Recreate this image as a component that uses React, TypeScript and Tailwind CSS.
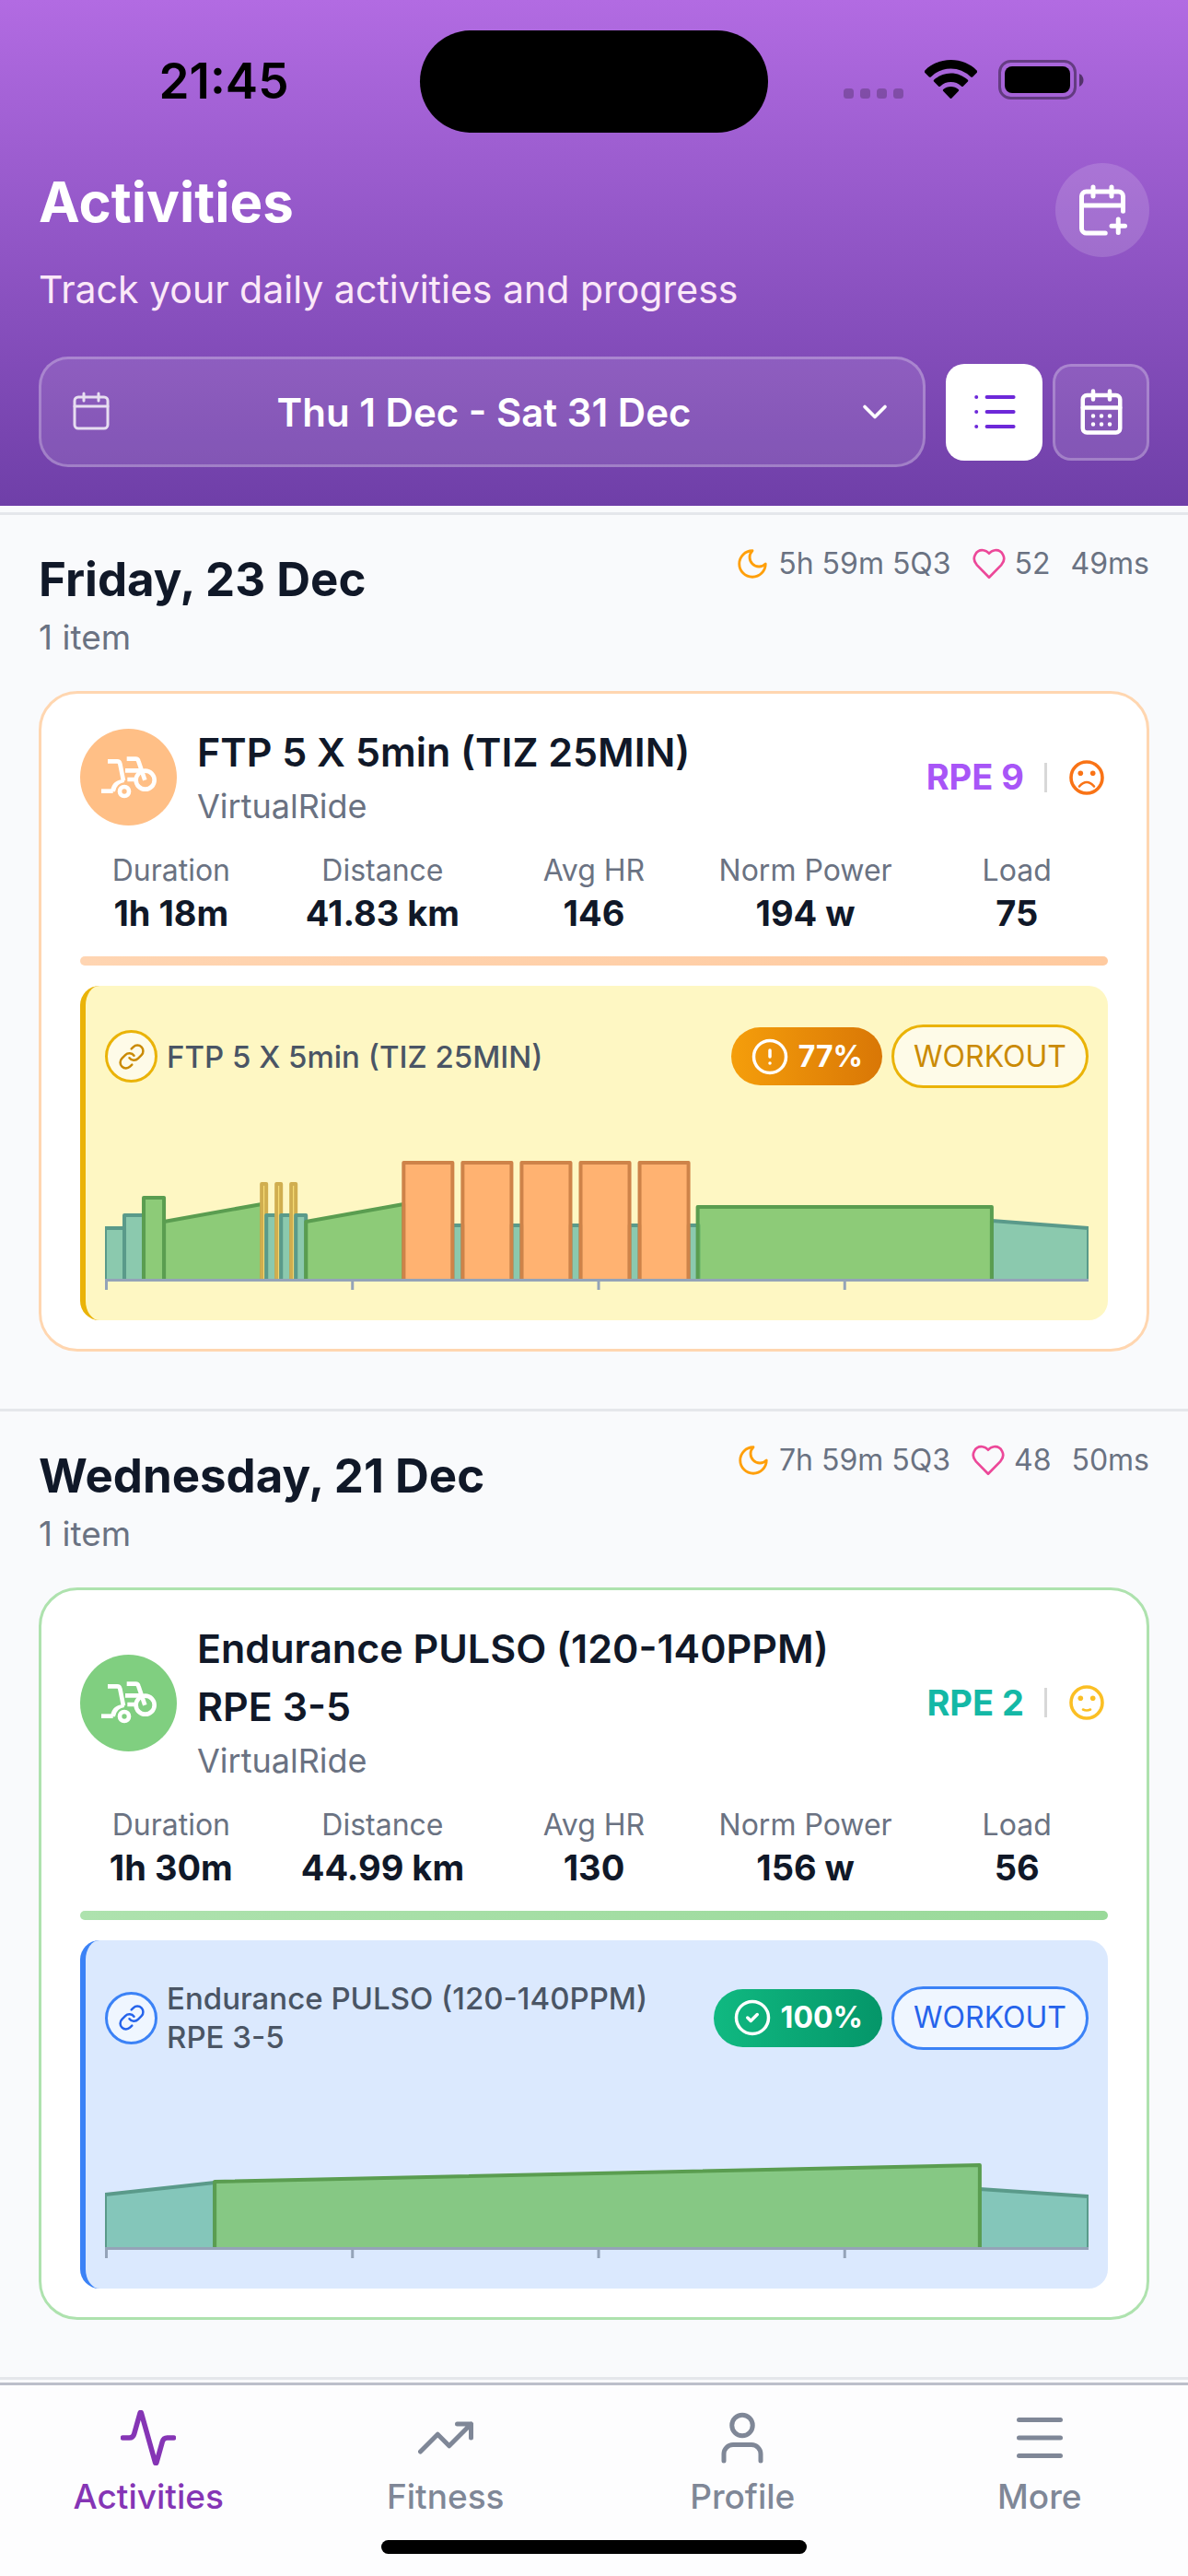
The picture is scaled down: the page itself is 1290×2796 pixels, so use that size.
import type { ReactNode } from "react";
import { CircleCheck, CircleAlert, Link } from "lucide-react";

type Zone = "recovery" | "endurance" | "tempo" | "threshold";

// x start, x end, top at start, top at end
type Segment = [Zone, number, number, number, number];

type Activity = {
  title: string;
  sport: string;
  rpe: number;
  mood: "sad" | "smile";
  stats: [string, string][];
  compliance: string;
  segments: Segment[];
};

type Day = {
  label: string;
  sleep: string;
  restingHr: string;
  hrv: string;
  theme: "orange" | "green";
  activity: Activity;
};

const zoneColors: Record<Zone, { fill: string; stroke: string }> = {
  recovery: { fill: "#6ebda9", stroke: "#5a9a8a" },
  endurance: { fill: "#71bf65", stroke: "#5a9d50" },
  tempo: { fill: "#ffe06a", stroke: "#d0ae4f" },
  threshold: { fill: "#ffa05d", stroke: "#ce8349" },
};

const intervals: Segment[] = [324, 388, 452, 516, 580].flatMap((x): Segment[] => [
  ["recovery", x + 53, x + 64, 137, 137],
  ["threshold", x, x + 53, 69, 69],
]);

const sprints: Segment[] = [170, 186, 202].flatMap((x): Segment[] => [
  ["tempo", x, x + 5, 92, 92],
  ["recovery", x + 5, x + 16, 126, 126],
]);

const days: Day[] = [
  {
    label: "Friday, 23 Dec",
    sleep: "5h 59m 5Q3",
    restingHr: "52",
    hrv: "49ms",
    theme: "orange",
    activity: {
      title: "FTP 5 X 5min (TIZ 25MIN)",
      sport: "VirtualRide",
      rpe: 9,
      mood: "sad",
      stats: [
        ["Duration", "1h 18m"],
        ["Distance", "41.83 km"],
        ["Avg HR", "146"],
        ["Norm Power", "194 w"],
        ["Load", "75"],
      ],
      compliance: "77%",
      segments: [
        ["recovery", 0, 21, 140, 140],
        ["recovery", 21, 42, 126, 126],
        ["endurance", 64, 170, 133, 114],
        ["endurance", 42, 64, 107, 107],
        ...sprints,
        ["endurance", 218, 324, 133, 114],
        ...intervals,
        ["recovery", 962, 1067, 132, 140],
        ["endurance", 643, 962, 117, 117],
      ],
    },
  },
  {
    label: "Wednesday, 21 Dec",
    sleep: "7h 59m 5Q3",
    restingHr: "48",
    hrv: "50ms",
    theme: "green",
    activity: {
      title: "Endurance PULSO (120-140PPM) RPE 3-5",
      sport: "VirtualRide",
      rpe: 2,
      mood: "smile",
      stats: [
        ["Duration", "1h 30m"],
        ["Distance", "44.99 km"],
        ["Avg HR", "130"],
        ["Norm Power", "156 w"],
        ["Load", "56"],
      ],
      compliance: "100%",
      segments: [
        ["recovery", 0, 119, 138, 125],
        ["recovery", 949, 1067, 132, 140],
        ["endurance", 119, 949, 124, 106],
      ],
    },
  },
];

const themes = {
  orange: {
    card: "border-[#ffd6b0]",
    avatar: "bg-[#ffbf86]",
    bar: "from-[#ffd5b2] to-[#ffca9f]",
    panel: "border-[#eab308] bg-[#fef7c3]",
    chip: "border-[#eab308] bg-[#fefbe8] text-[#ca8a04]",
    score: "from-[#f59e0b] to-[#d97706]",
    rpe: "text-[#a855f7]",
    mood: "text-[#f97316]",
  },
  green: {
    card: "border-[#aee2ae]",
    avatar: "bg-[#80cf80]",
    bar: "from-[#aee2ae] to-[#99d999]",
    panel: "border-[#3b82f6] bg-[#dbe9fe]",
    chip: "border-[#3b82f6] bg-[#eff6ff] text-[#2563eb]",
    score: "from-[#10b981] to-[#059669]",
    rpe: "text-[#14b8a6]",
    mood: "text-[#fbbf24]",
  },
};

const Icon = ({ className, width = 2, children }: { className: string; width?: number; children: ReactNode }) => (
  <svg
    viewBox="0 0 24 24"
    fill="none"
    stroke="currentColor"
    strokeWidth={width}
    strokeLinecap="round"
    strokeLinejoin="round"
    className={className}
    aria-hidden="true"
  >
    {children}
  </svg>
);

const HandcycleIcon = () => (
  <svg viewBox="87 120 180 138" fill="none" stroke="#fff" strokeWidth="14" className="h-[46px] w-[60px]" aria-hidden="true">
    <path d="M108 136h31q7 0 9 8l11 55" />
    <path d="M170 128h29q7 0 9 7l21 62" />
    <path d="M165 166h54M172 195h30" />
    <path d="M87 233h38" />
    <path d="M118 229q6-33 44-34v9q-26 4-30 31h-14z" fill="#fff" stroke="none" />
    <circle cx="162" cy="234" r="15" />
    <circle cx="230" cy="197" r="30" />
  </svg>
);

const MoodIcon = ({ mood, className }: { mood: "sad" | "smile"; className: string }) => (
  <svg viewBox="0 0 38 38" fill="none" stroke="currentColor" strokeWidth="3.6" strokeLinecap="round" className={className} aria-hidden="true">
    <circle cx="19" cy="19" r="17" />
    <circle cx="12.3" cy="14.3" r="2.8" fill="currentColor" stroke="none" />
    <circle cx="25.7" cy="14.3" r="2.8" fill="currentColor" stroke="none" />
    {mood === "sad" ? (
      <path d="M11 28.5q8-9 16 0" strokeWidth="2.6" />
    ) : (
      <path d="M15 26.500q4 2 8 0" strokeWidth="2.6" />
    )}
  </svg>
);

const StatusBar = () => (
  <div className="grid h-[177px] grid-cols-3 items-start px-[42px] pt-[33px] text-black">
    <div className="flex h-[111px] items-center justify-center">
      <span className="text-[53px] leading-none font-semibold">21:45</span>
    </div>
    <div className="mx-auto h-[111px] w-[378px] rounded-full bg-black" />
    <div className="flex h-[106px] items-center justify-end gap-[23px] pr-[71px]">
      <svg viewBox="0 0 65 42" className="h-[42px] w-[65px]" aria-hidden="true">
        {[0, 18, 36, 54].map((x) => (
          <rect key={x} x={x} y="31" width="11" height="11" rx="3.5" fillOpacity="0.22" />
        ))}
      </svg>
      <svg viewBox="0 0 57 42" className="h-[42px] w-[57px]" aria-hidden="true">
        <path d="M28.5 0C39.6 0 49.600 4.300 56.600 11.400a1.800 1.800 0 0 1 0 2.600l-4.200 4.200a1.800 1.800 0 0 1-2.500 0A31.500 31.500 0 0 0 28.500 9.400 31.500 31.500 0 0 0 7.100 18.200a1.800 1.800 0 0 1-2.500 0L.4 14a1.800 1.800 0 0 1 0-2.600C7.400 4.300 17.400 0 28.500 0z" />
        <path d="M28.500 14.500c7 0 13.400 2.700 18.200 7.100a1.500 1.500 0 0 1 0 2.200L42 28.500a1.500 1.500 0 0 1-2.200 0 16.600 16.600 0 0 0-22.600 0 1.500 1.500 0 0 1-2.200 0l-4.700-4.700a1.500 1.500 0 0 1 0-2.200c4.800-4.400 11.200-7.100 18.200-7.100z" />
        <path d="M28.500 29c3.100 0 6 1.200 8.200 3.100a1.400 1.400 0 0 1 0 2l-7.200 7.400a1.400 1.400 0 0 1-2 0l-7.200-7.400a1.400 1.400 0 0 1 0-2c2.200-1.900 5.100-3.100 8.200-3.100z" />
      </svg>
      <svg viewBox="0 0 93 43" className="h-[43px] w-[93px]" aria-hidden="true">
        <rect x="1.500" y="1.500" width="82" height="40" rx="12" fill="none" stroke="#000" strokeOpacity="0.4" strokeWidth="3" />
        <rect x="7" y="7" width="71" height="29" rx="8" />
        <path d="M88 15c6 3 6 11 0 14z" fillOpacity="0.5" />
      </svg>
    </div>
  </div>
);

const Header = () => (
  <header className="bg-linear-to-b from-[#b26be2] to-[#6f3fa8] pb-[42px] text-white">
    <StatusBar />
    <div className="px-[42px]">
      <div className="flex items-start justify-between">
        <div>
          <h1 className="pt-[6px] text-[60px] leading-[72px] font-bold">Activities</h1>
          <p className="mt-[29px] text-[41px] leading-[60px] text-[#fbe8f8]">Track your daily activities and progress</p>
        </div>
        <button type="button" aria-label="Add event" className="flex size-[102px] items-center justify-center rounded-full bg-white/15">
          <Icon className="size-[60px]">
            <path d="M13.300 22H5a2 2 0 0 1-2-2V6a2 2 0 0 1 2-2h14a2 2 0 0 1 2 2v6.500M8 2v4M16 2v4M3 10h18M16 18.900h5.800M18.900 16v5.800" />
          </Icon>
        </button>
      </div>
      <div className="mt-[43px] flex items-center gap-[22px]">
        <button
          type="button"
          className="flex h-[120px] flex-1 items-center justify-between rounded-[32px] border-3 border-white/25 bg-white/10 px-[30px] text-[42px] font-semibold"
        >
          <Icon className="size-12 opacity-80" width={1.5}>
            <rect x="3" y="4" width="18" height="17" rx="2" />
            <path d="M3 9h18M8 2v4M16 2v4" />
          </Icon>
          <span>Thu 1 Dec - Sat 31 Dec</span>
          <Icon className="size-11">
            <path d="m6 9 6 6 6-6" />
          </Icon>
        </button>
        <div className="flex gap-[11px]">
          <button type="button" aria-label="List view" className="flex size-[105px] items-center justify-center rounded-[20px] bg-white text-[#6d28d9]">
            <Icon className="size-12">
              <path d="M7.800 4h14.500M7.800 12h14.500M7.800 20h14.500M2.100 4h.01M2.100 12h.01M2.100 20h.01" />
            </Icon>
          </button>
          <button
            type="button"
            aria-label="Calendar view"
            className="flex size-[105px] items-center justify-center rounded-[20px] border-3 border-white/25 bg-white/10"
          >
            <Icon className="size-[54px]">
              <rect x="3" y="4" width="18" height="18" rx="2" />
              <path d="M3 10h18M8 2v4M16 2v4M8 14h.01M12 14h.01M16 14h.01M8 18h.01M12 18h.01M16 18h.01" />
            </Icon>
          </button>
        </div>
      </div>
    </div>
  </header>
);

const WorkoutChart = ({ segments }: { segments: Segment[] }) => (
  <svg viewBox="0 0 1067 207" preserveAspectRatio="none" className="mt-3 h-[207px] w-full" role="img" aria-label="Workout profile">
    {segments.map(([zone, x1, x2, y1, y2]) => (
      <path
        key={`${zone}-${x1}`}
        d={`M${x1} 196V${y1}L${x2} ${y2}V196`}
        fill={zoneColors[zone].fill}
        fillOpacity="0.8"
        stroke={zoneColors[zone].stroke}
        strokeWidth="4"
        strokeLinejoin="round"
      />
    ))}
    <path d="M0 196.500h1067M1.500 196v11M268.500 196v11M535.500 196v11M802.500 196v11" stroke="#94a3b8" strokeWidth="3" />
  </svg>
);

const ActivityCard = ({ activity, theme }: { activity: Activity; theme: "orange" | "green" }) => {
  const t = themes[theme];
  const ScoreIcon = theme === "orange" ? CircleAlert : CircleCheck;

  return (
    <article className={`mt-[27px] rounded-[42px] border-3 bg-white px-[42px] pt-8 pb-[31px] ${t.card}`}>
      <div className="flex items-center">
        <div className={`flex size-[105px] shrink-0 items-center justify-center rounded-full ${t.avatar}`}>
          <HandcycleIcon />
        </div>
        <div className="ml-[22px] flex-1 pr-20">
          <h3 className="text-[43px] leading-[63px] font-semibold text-gray-900">{activity.title}</h3>
          <p className="text-[36px] leading-[54px] text-gray-500">{activity.sport}</p>
        </div>
        <div className="flex shrink-0 items-center">
          <span className={`text-[38px] font-bold ${t.rpe}`}>RPE {activity.rpe}</span>
          <span className="mr-6 ml-[22px] h-8 w-[3px] bg-[#d8d8d8]" />
          <MoodIcon mood={activity.mood} className={`mr-1 size-[38px] ${t.mood}`} />
        </div>
      </div>
      <dl className="-mx-4 mt-[19px] grid grid-cols-5 text-center">
        {activity.stats.map(([label, value]) => (
          <div key={label}>
            <dt className="text-[32px] leading-[47px] text-gray-500">{label}</dt>
            <dd className="text-[38px] leading-[46px] font-bold text-gray-900">{value}</dd>
          </div>
        ))}
      </dl>
      <div className={`mt-6 h-[10px] rounded-full bg-linear-to-r ${t.bar}`} />
      <div className={`mt-[22px] rounded-[21px] border-l-6 pt-[42px] pr-[21px] pb-[33px] pl-[21px] ${t.panel}`}>
        <div className="flex items-center">
          <span className={`flex size-[57px] shrink-0 items-center justify-center rounded-full border-3 ${t.chip}`}>
            <Link className="size-[30px]" />
          </span>
          <h4 className="ml-[10px] flex-1 pr-10 text-[33px] leading-[42px] font-medium text-gray-600">{activity.title}</h4>
          <span className={`flex h-[63px] shrink-0 items-center gap-[10px] rounded-full bg-linear-to-r px-[21px] text-[32px] font-bold text-white ${t.score}`}>
            <ScoreIcon className="size-[42px]" />
            {activity.compliance}
          </span>
          <span className={`ml-[10px] flex h-[69px] shrink-0 items-center rounded-full border-3 px-[21px] text-[32px] ${t.chip}`}>
            WORKOUT
          </span>
        </div>
        <WorkoutChart segments={activity.segments} />
      </div>
    </article>
  );
};

const DaySection = ({ day }: { day: Day }) => (
  <section className="border-t-3 border-gray-200 px-[42px] pb-[62px]">
    <div className="flex items-start justify-between pt-[34px]">
      <div className="pt-1">
        <h2 className="text-[51px] leading-[63px] font-bold text-gray-900">{day.label}</h2>
        <p className="text-[37px] leading-[63px] text-gray-500">1 item</p>
      </div>
      <div className="flex items-center text-[32px] leading-[36px] text-gray-500">
        <Icon className="mr-[9px] size-[38px] text-[#ff9f0a]" width={1.8}>
          <path d="M12 3a6.360 6.360 0 0 0 9 9 9 9 0 1 1-9-9Z" />
        </Icon>
        <span>{day.sleep}</span>
        <Icon className="mr-[9px] ml-[22px] size-[38px] text-[#ec4899]" width={1.7}>
          <path d="M12 21.300 3.700 12.900C-.8 7.800 3.500 2.200 8 2.700c1.900.2 3.100 1.100 4 2.200.9-1.100 2.100-2 4-2.200 4.500-.5 8.800 5.100 4.300 10.200Z" />
        </Icon>
        <span>{day.restingHr}</span>
        <span className="ml-[22px]">{day.hrv}</span>
      </div>
    </div>
    <ActivityCard activity={day.activity} theme={day.theme} />
  </section>
);

const tabs = [
  {
    label: "Activities",
    icon: (
      <g transform="translate(-1.2 -1.2) scale(1.1)">
        <path d="M22 12h-2.480a2 2 0 0 0-1.930 1.460l-2.350 8.360a.25.25 0 0 1-.48 0L9.240 2.180a.25.25 0 0 0-.48 0l-2.350 8.360A2 2 0 0 1 4.490 12H2" />
      </g>
    ),
  },
  { label: "Fitness", icon: <path d="M23 6l-9.500 9.500-5-5L1 18M17 6h6v6" /> },
  {
    label: "Profile",
    icon: (
      <>
        <circle cx="12" cy="6.600" r="4.500" />
        <path d="M4 22v-3a4 4 0 0 1 4-4h8a4 4 0 0 1 4 4v3" />
      </>
    ),
  },
  { label: "More", icon: <path d="M3 4.200h18M3 12h18M3 19.800h18" /> },
];

const TabBar = () => (
  <footer className="border-t-3 border-[#bcbfca] bg-[#fdfdfe]">
    <nav className="grid grid-cols-4">
      {tabs.map((tab, i) => (
        <a
          key={tab.label}
          href="#"
          aria-current={i === 0 ? "page" : undefined}
          className={`flex flex-col items-center pt-[27px] ${i === 0 ? "text-[#8535b5]" : "text-[#7f8797]"}`}
        >
          <Icon className="size-[60px]">{tab.icon}</Icon>
          <span className="mt-3 text-[37px] leading-[44px] font-medium">{tab.label}</span>
        </a>
      ))}
    </nav>
    <div className="mx-auto mt-[25px] mb-6 h-[15px] w-[462px] rounded-full bg-black" />
  </footer>
);

export default function App() {
  return (
    <div className="flex min-h-screen flex-col bg-[#f9fafc] font-['Inter',sans-serif]">
      <Header />
      <main className="flex-1 pt-[7px]">
        {days.map((day) => (
          <DaySection key={day.label} day={day} />
        ))}
        <div className="h-[6px] border-t-3 border-gray-200" />
      </main>
      <TabBar />
    </div>
  );
}
